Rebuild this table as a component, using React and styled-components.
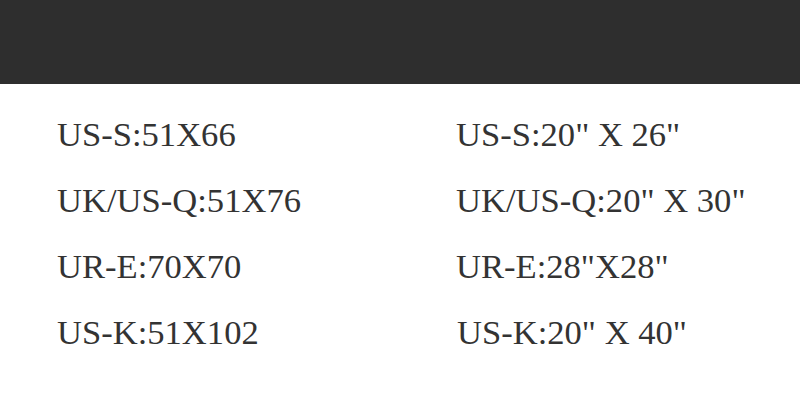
import React from "react";
import styled, { createGlobalStyle } from "styled-components";

const Global = createGlobalStyle`
  html, body { margin: 0; padding: 0; background: #ffffff; }
  #root { width: 800px; height: 412px; overflow: hidden; }
`;

const Page = styled.div`
  width: 800px;
  height: 412px;
  background: #ffffff;
  display: flex;
  flex-direction: column;
`;

const Header = styled.div`
  height: 84px;
  background: #2e2e2e;
  flex-shrink: 0;
`;

const Grid = styled.div`
  display: grid;
  grid-template-columns: 399px 1fr;
  padding: 17px 0 0 57px;
`;

const Cell = styled.div`
  font-family: "Liberation Serif", "Times New Roman", serif;
  font-size: 34.6px;
  line-height: 66px;
  color: #333333;
  white-space: nowrap;
  padding-left: ${(p) => p.$shift || 0}px;
`;

const rows = [
  ["US-S:51X66", 'US-S:20" X 26"', 0],
  ["UK/US-Q:51X76", 'UK/US-Q:20" X 30"', 0],
  ["UR-E:70X70", 'UR-E:28"X28"', 0],
  ["US-K:51X102", 'US-K:20" X 40"', 1],
];

export default function App() {
  return (
    <Page>
      <Global />
      <Header />
      <Grid>
        {rows.map(([a, b, s]) => (
          <React.Fragment key={a}>
            <Cell>{a}</Cell>
            <Cell $shift={s}>{b}</Cell>
          </React.Fragment>
        ))}
      </Grid>
    </Page>
  );
}
